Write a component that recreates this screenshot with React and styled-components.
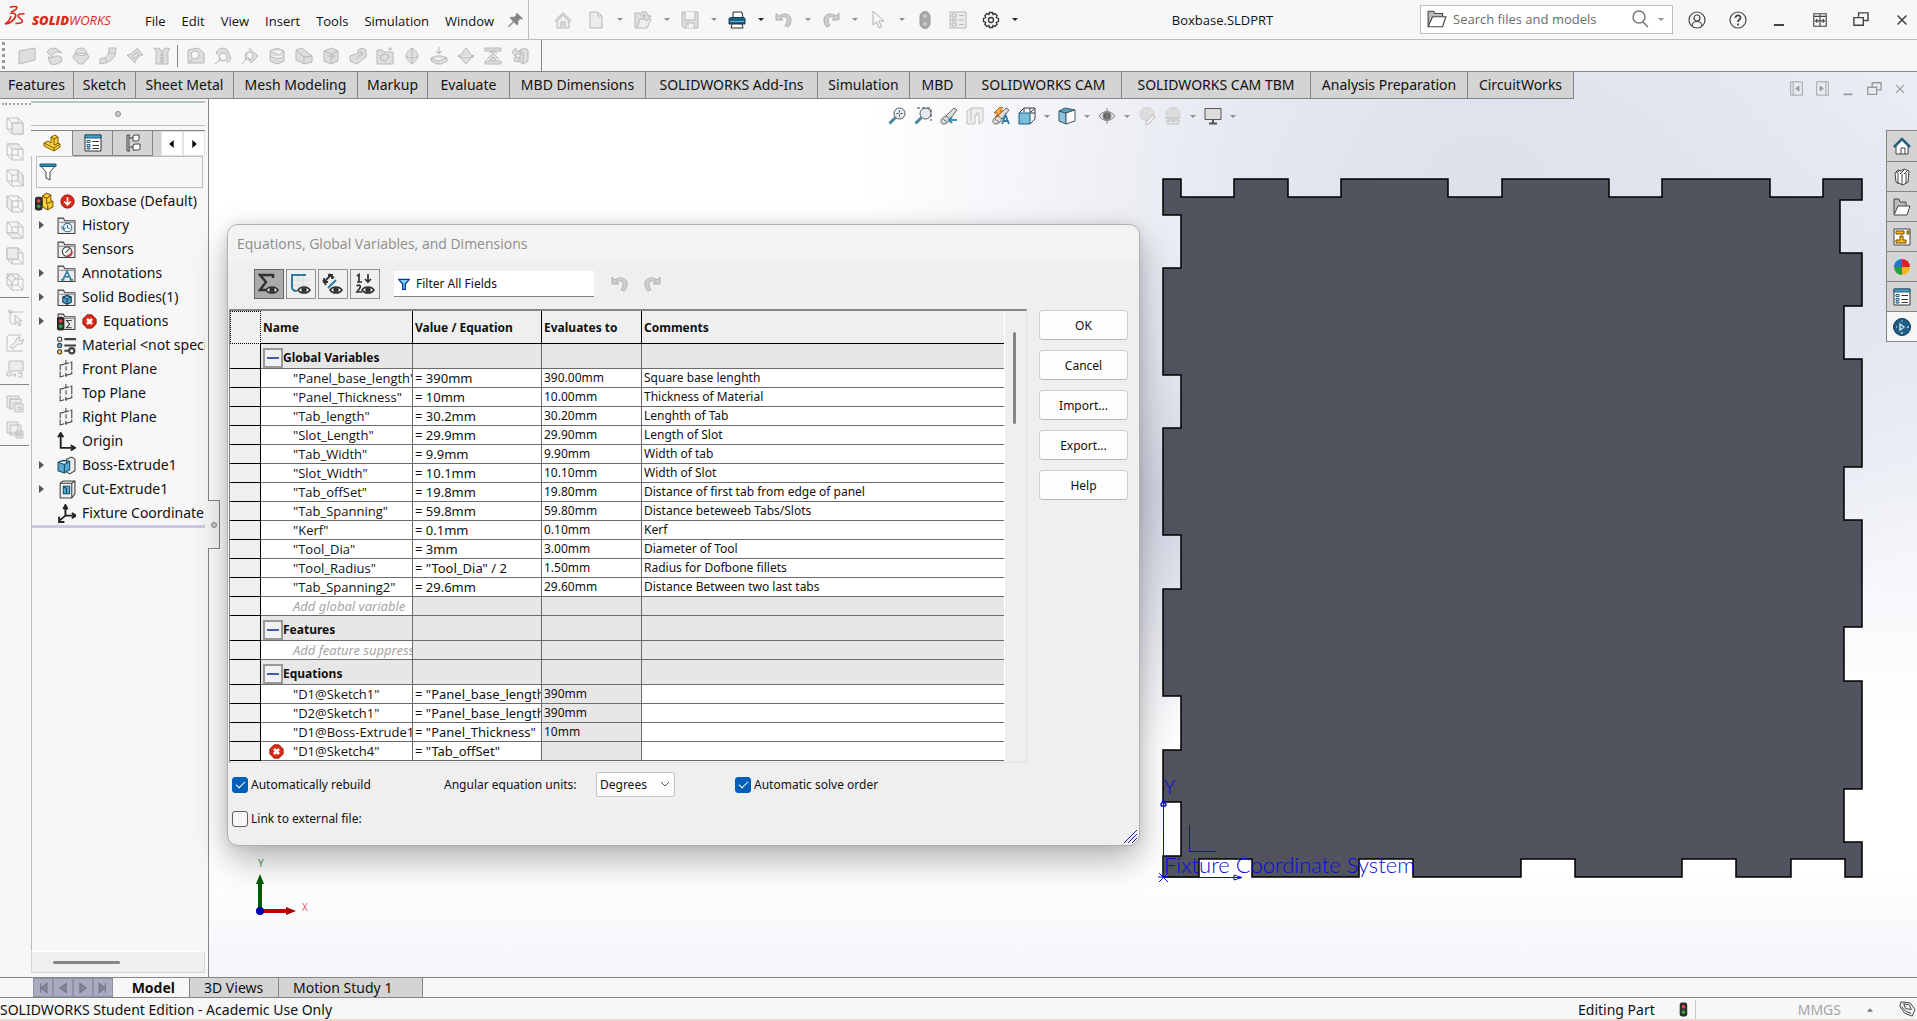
import styled, { createGlobalStyle, css } from "styled-components";

const GlobalStyle = createGlobalStyle`
  * { box-sizing: border-box; }
  body {
    margin: 0;
    overflow: hidden;
    font-family: "Noto Sans", "Open Sans", sans-serif;
    font-size: 14px;
    color: #111;
  }
  button, input, select { font-family: inherit; color: inherit; }
  button { border: none; padding: 0; background: none; }
  svg { display: block; flex: none; }
`;

/* ---------- page frame ---------- */

const Page = styled.div`
  height: 100vh;
  display: flex;
  flex-direction: column;
  background: #f7f7f7;
`;
const TitleBar = styled.header`
  display: flex;
  align-items: center;
  height: 40px;
  flex: none;
  border-bottom: 1px solid #bdbdbd;
  font-family: "Open Sans", "Noto Sans", sans-serif;
`;
const Brand = styled.div`
  display: flex;
  align-items: center;
  gap: 7px;
  width: 137px;
  padding: 0 0 7px 4px;
`;
const BrandName = styled.span`
  font-size: 13px;
  line-height: 16px;
  font-style: italic;
  color: #da291c;
  padding-top: 7px;
  b { font-weight: 800; }
`;
const Menu = styled.nav`
  display: flex;
  align-items: center;
  height: 39px;
  width: 392px;
  padding-top: 2px;
  border-right: 1px solid #bdbdbd;
`;
const MenuItem = styled.button`
  font-size: 13px;
  line-height: 18px;
  padding: 0 8px;
  white-space: nowrap;
`;
const PinButton = styled.button`
  margin-left: 6px;
`;
const QuickTools = styled.div`
  display: flex;
  align-items: center;
  padding-left: 22px;
`;
const ToolButton = styled.button`
  display: flex;
  align-items: center;
  justify-content: center;
  width: ${(p) => p.$w || 24}px;
  height: 24px;
  margin-right: ${(p) => p.$gap || 0}px;
`;
const Caret = styled.button`
  display: flex;
  align-items: center;
  justify-content: center;
  width: ${(p) => p.$w || 23}px;
  height: 24px;
  &::before {
    content: "";
    border: 3px solid transparent;
    border-top-color: ${(p) => (p.$on ? "#222" : "#8f8f8f")};
    border-bottom-width: 0;
  }
`;
const DocName = styled.h1`
  flex: 1;
  margin: 0;
  padding-right: 1px;
  text-align: center;
  font-size: 13px;
  line-height: 18px;
  font-weight: 400;
`;
const Search = styled.label`
  display: flex;
  align-items: center;
  width: 253px;
  height: 29px;
  margin-bottom: 1px;
  padding-left: 6px;
  background: #fff;
  border: 1px solid #bdbdbd;
`;
const SearchInput = styled.input`
  flex: 1;
  min-width: 0;
  margin-left: 6px;
  padding: 0;
  border: none;
  outline: none;
  background: none;
  font-size: 13px;
  &::placeholder { color: #6c6c6c; opacity: 1; }
`;
const WindowButtons = styled.div`
  display: flex;
  align-items: center;
  padding-left: 3px;
`;
const ShelfBar = styled.div`
  display: flex;
  align-items: center;
  height: 31px;
  flex: none;
  width: 542px;
  padding-left: 2px;
  border-right: 1px solid #858585;
`;
const Grip = styled.div`
  width: 3px;
  height: 27px;
  margin-right: 8px;
  border-left: 3px dotted #9a9a9a;
`;
const ShelfLine = styled.div`
  width: 1px;
  height: 22px;
  margin: 0 4px 0 2px;
  background: #858585;
`;
const Main = styled.main`
  flex: 1;
  min-height: 0;
  display: flex;
  flex-direction: column;
  border-top: 1px solid #858585;
  background:
    radial-gradient(ellipse 620px 520px at 1480px 110px, #dde1ec 0%, rgba(221, 225, 236, 0.75) 40%, rgba(255, 255, 255, 0) 100%),
    radial-gradient(ellipse 300px 260px at 1160px 420px, #ccd0df 0%, rgba(255, 255, 255, 0) 100%),
    radial-gradient(ellipse 700px 420px at 1900px 230px, #e4e8f1 0%, rgba(255, 255, 255, 0) 100%),
    linear-gradient(#fff 0%, #fff 88%, #f4f5fa 100%);
`;
const TabBar = styled.div`
  display: flex;
  height: 27px;
  flex: none;
`;
const CommandTab = styled.button`
  width: ${(p) => p.$w}px;
  background: #d4d4d4;
  border-right: 1px solid #858585;
  border-bottom: 1px solid #858585;
  font-size: 14px;
  line-height: 24px;
  white-space: nowrap;
`;
const DocButtons = styled.div`
  display: flex;
  align-items: center;
  margin-left: auto;
  padding: 6px 4px 0 0;
`;
const Body = styled.div`
  flex: 1;
  min-height: 0;
  display: flex;
`;

/* ---------- left side ---------- */

const ViewBar = styled.div`
  width: 31px;
  background: #f7f7f7;
`;
const TopGrip = styled.div`
  margin: 4px 0 11px 2px;
  height: 2px;
  border-top: 2px dotted #a5a5a5;
`;
const ViewGroup = styled.div`
  display: flex;
  flex-direction: column;
  gap: 8px;
  padding: 1px 0 6px 6px;
  margin: 0 2px 9px 0;
  border-bottom: 1px solid #858585;
  button { height: 18px; }
`;
const Panel = styled.aside`
  display: flex;
  flex-direction: column;
  width: 178px;
  padding-right: 3px;
  background: #f7f7f7;
  border-right: 1px solid #858585;
`;
const Splitter = styled.div`
  display: flex;
  align-items: center;
  justify-content: center;
  height: 25px;
  margin-top: 2px;
  border-top: 2px solid #b9c4c9;
  border-bottom: 1px solid #bdbdbd;
`;
const Dot = styled.span`
  width: 6px;
  height: 6px;
  border-radius: 3px;
  border: 1px solid #8c8c8c;
  background: #ccc;
`;
const PanelTabs = styled.div`
  display: flex;
  height: 26px;
  margin-top: 4px;
  background: #d4d4d4;
  border-top: 1px solid #858585;
`;
const PanelTab = styled.button`
  display: flex;
  align-items: center;
  justify-content: center;
  width: ${(p) => (p.$active ? 42 : 40)}px;
  border-right: 1px solid #858585;
  border-bottom: 1px solid ${(p) => (p.$active ? "#f7f7f7" : "#858585")};
  background: ${(p) => (p.$active ? "#f7f7f7" : "#d4d4d4")};
`;
const PanelScrollers = styled.div`
  flex: 1;
  display: flex;
  padding-left: 8px;
`;
const PanelArrow = styled.button`
  flex: 1;
  display: flex;
  align-items: center;
  justify-content: center;
  background: #fff;
  border: 1px solid #e2e2e2;
`;
const TreeBox = styled.div`
  flex: 1;
  min-height: 0;
  border-left: 1px solid #bdbdbd;
  overflow: hidden;
`;
const FilterBox = styled.label`
  display: flex;
  align-items: center;
  height: 32px;
  margin: 0 2px 1px 4px;
  padding-left: 2px;
  border: 1px solid #bdbdbd;
  input {
    width: 130px;
    border: none;
    outline: none;
    background: none;
  }
`;
const Tree = styled.ul`
  list-style: none;
  margin: 0;
  padding: 0;
  border-bottom: 3px solid #c9c9e2;
`;
const TreeRow = styled.li`
  display: flex;
  align-items: center;
  gap: 6px;
  height: 24px;
  padding-left: ${(p) => (p.$root ? 3 : 7)}px;
  font-size: 14px;
  line-height: 20px;
  white-space: nowrap;
`;
const Expander = styled.span`
  width: 12px;
  flex: none;
  &::before {
    content: "";
    display: ${(p) => (p.$show ? "block" : "none")};
    width: 0;
    border: 4px solid transparent;
    border-left: 5px solid #555;
    border-right-width: 0;
  }
`;
const HScroll = styled.div`
  display: flex;
  align-items: center;
  height: 22px;
  margin-bottom: 4px;
  padding-left: 21px;
  background: #efefef;
  border: 1px solid #d6d6d6;
  border-top-color: #fff;
  &::before {
    content: "";
    width: 67px;
    height: 3px;
    border-radius: 2px;
    background: #858585;
  }
`;

/* ---------- graphics area ---------- */

const Viewport = styled.section`
  position: relative;
  flex: 1;
  min-width: 0;
`;
const HeadsUp = styled.div`
  display: flex;
  justify-content: center;
  padding: 5px 3px 0 0;
`;
const PanelHandle = styled.button`
  position: absolute;
  left: -1px;
  top: 401px;
  display: flex;
  align-items: center;
  justify-content: center;
  width: 12px;
  height: 49px;
  background: #f7f7f7;
  border: 1px solid #858585;
  border-left: none;
`;
const Board = styled.svg`
  position: absolute;
  left: 941px;
  top: 66px;
`;
const Triad = styled.svg`
  position: absolute;
  left: 36px;
  bottom: 50px;
`;
const TaskPane = styled.div`
  position: absolute;
  right: 0;
  top: 31px;
  width: 31px;
  border: 1px solid #858585;
  border-right: none;
`;
const TaskButton = styled.button`
  display: flex;
  align-items: center;
  justify-content: center;
  width: 30px;
  height: 30px;
  background: ${(p) => (p.$light ? "#f7f7f7" : "#d4d4d4")};
  & + & { border-top: 1px solid #858585; }
`;

/* ---------- equations dialog ---------- */

const Dialog = styled.section`
  position: absolute;
  left: 18px;
  top: 125px;
  width: 913px;
  background: #efefef;
  border: 1px solid #b0b0b0;
  border-radius: 11px;
  box-shadow: 0 14px 34px rgba(0, 0, 0, 0.3), 0 0 10px rgba(0, 0, 0, 0.08);
  font-size: 12px;
  z-index: 2;
`;
const DialogTitle = styled.h2`
  margin: 0;
  padding: 0 9px;
  font-family: "Open Sans", "Noto Sans", sans-serif;
  font-size: 14px;
  line-height: 37px;
  font-weight: 400;
  color: #8d8d8d;
  background: #f3f3f3;
  border-radius: 10px 10px 0 0;
`;
const DialogTools = styled.div`
  display: flex;
  align-items: center;
  gap: 2px;
  padding: 7px 0 10px 26px;
`;
const ViewToggle = styled.button`
  display: flex;
  align-items: center;
  justify-content: center;
  width: 30px;
  height: 30px;
  border: 1px solid #8f8f8f;
  background: ${(p) => (p.$on ? "#ababab" : "#efefef")};
  ${(p) => p.$on && css`border-color: #666;`}
`;
const FilterField = styled.label`
  display: flex;
  align-items: center;
  gap: 6px;
  width: 200px;
  height: 26px;
  margin: 0 12px;
  padding-left: 4px;
  background: #fff;
  border-bottom: 1px solid #858585;
  input {
    width: 150px;
    padding: 0;
    border: none;
    outline: none;
    font-size: 12px;
    &::placeholder { color: #111; opacity: 1; }
  }
`;
const DialogBody = styled.div`
  display: flex;
  padding-left: 1px;
`;
const TableFrame = styled.div`
  display: flex;
  flex: 1;
  min-width: 0;
  height: 454px;
  border: 1px solid #e2e2e2;
  border-top: 2px solid #858585;
  border-left: 1px solid #858585;
  overflow: hidden;
`;
const TableScroll = styled.div`
  flex: 1;
  min-width: 0;
`;
const Table = styled.table`
  width: 100%;
  table-layout: fixed;
  border-collapse: separate;
  border-spacing: 0;
  color: #111;
`;
const Th = styled.th`
  height: 33px;
  padding: 0 2px;
  text-align: left;
  font-size: 12px;
  background: #efefef;
  border-bottom: 1px solid #000;
  border-right: 1px solid #000;
  &:first-child { border: 1px dotted #000; }
  &:last-child { border-right: none; }
`;
const Td = styled.td`
  height: 19px;
  padding: 0 2px;
  font-size: ${(p) => (p.$big ? 13 : 12)}px;
  line-height: 18px;
  white-space: nowrap;
  overflow: hidden;
  background: ${(p) => (p.$grey ? "#e7e7e7" : "#fff")};
  border-right: 1px solid #6b6b6b;
  border-bottom: 1px solid #6b6b6b;
  &:last-child { border-right: none; }
`;
const Gutter = styled.td`
  padding: 0;
  background: #efefef;
  border-right: 1px solid #000;
  border-bottom: 1px solid #000;
`;
const NameCell = styled.div`
  display: flex;
  align-items: center;
  padding-left: ${(p) => (p.$flag ? 6 : 30)}px;
  gap: 9px;
  font-family: "Open Sans", "Noto Sans", sans-serif;
`;
const Hint = styled.i`
  color: #a6a6a6;
  font-family: "Noto Sans", sans-serif;
`;
const GroupName = styled.div`
  display: flex;
  align-items: flex-end;
  height: 24px;
  font-size: 12px;
  line-height: 20px;
  font-weight: 700;
`;
const Collapse = styled.button`
  display: flex;
  align-items: center;
  justify-content: center;
  width: 20px;
  height: 20px;
  border: 2px solid #999;
  background: #f2f2f2;
  &::before {
    content: "";
    width: 12px;
    height: 2px;
    background: #3f5fa8;
  }
`;
const VScroll = styled.div`
  width: 22px;
  padding: 21px 0 0 8px;
  border-left: 1px solid #fff;
  &::before {
    content: "";
    display: block;
    width: 3px;
    height: 92px;
    border-radius: 2px;
    background: #858585;
  }
`;
const Actions = styled.div`
  display: flex;
  flex-direction: column;
  gap: 10px;
  width: 112px;
  padding: 1px 11px 0 12px;
`;
const ActionButton = styled.button`
  height: 30px;
  font-size: 12px;
  background: #fdfdfd;
  border: 1px solid #cfcfcf;
  border-bottom-color: #b5b5b5;
  border-radius: 4px;
`;
const Options = styled.div`
  display: grid;
  grid-template-columns: 212px 152px 139px 1fr;
  align-items: center;
  row-gap: 13px;
  padding: 9px 0 17px 4px;
`;
const Check = styled.label`
  display: flex;
  align-items: center;
  gap: 3px;
  font-size: 12px;
  line-height: 18px;
  white-space: nowrap;
  input {
    appearance: none;
    width: 16px;
    height: 16px;
    margin: 0;
    border: 1px solid #5f5f5f;
    border-radius: 3px;
    background: #f7f7f7;
  }
  input:checked {
    display: flex;
    align-items: center;
    justify-content: center;
    border-color: #005fb8;
    background: #005fb8;
  }
  input:checked::before {
    content: "";
    width: 8px;
    height: 4px;
    margin-bottom: 2px;
    border-left: 1px solid #fff;
    border-bottom: 1px solid #fff;
    transform: rotate(-45deg);
  }
`;
const SelectWrap = styled.div`
  position: relative;
  width: 79px;
  svg {
    position: absolute;
    right: 5px;
    top: 9px;
    pointer-events: none;
  }
`;
const Select = styled.select`
  appearance: none;
  width: 79px;
  height: 25px;
  padding: 0 3px;
  font-size: 12px;
  background: #fdfdfd;
  border: 1px solid #c4c4c4;
  border-radius: 2px;
`;
const ResizeGrip = styled.svg`
  position: absolute;
  right: 1px;
  bottom: 1px;
`;

/* ---------- bottom ---------- */

const SheetTabs = styled.div`
  display: flex;
  height: 21px;
  flex: none;
  padding-left: 33px;
  border-top: 1px solid #858585;
  border-bottom: 1px solid #858585;
`;
const NavButton = styled.button`
  display: flex;
  align-items: center;
  justify-content: center;
  width: 20px;
  background: #a9abbf;
  border: 1px solid #8f91a5;
`;
const SheetTab = styled.button`
  padding: 0 14px;
  width: ${(p) => p.$w}px;
  text-align: ${(p) => (p.$active ? "right" : "left")};
  font-size: 14px;
  line-height: 18px;
  border-right: 1px solid #858585;
  background: ${(p) => (p.$active ? "#f7f7f7" : "#d4d4d4")};
  font-weight: ${(p) => (p.$active ? 700 : 400)};
`;
const StatusBar = styled.footer`
  display: flex;
  align-items: center;
  height: 23px;
  flex: none;
  padding: 2px 1px 0 0;
  font-size: 14px;
  line-height: 20px;
  border-bottom: 2px solid #ecd5cb;
`;
const StatusCell = styled.span`
  margin-left: ${(p) => (p.$end ? "auto" : "0")};
  padding-right: ${(p) => p.$pad || 0}px;
  color: ${(p) => (p.$muted ? "#a6a6a6" : "#111")};
`;
const StatusLine = styled.span`
  width: 1px;
  height: 19px;
  margin: 0 102px 0 5px;
  background: #c9c9c9;
`;

/* ---------- icons ---------- */

const Icon = ({ s = 18, children, stroke = "#404040", fill = "none", w = 1 }) => (
  <svg width={s} height={s} viewBox="0 0 18 18" fill={fill} stroke={stroke} strokeWidth={w} aria-hidden="true">
    {children}
  </svg>
);
const Pale = ({ children }) => <Icon stroke="#b8b8b8" fill="#dedede">{children}</Icon>;

const Logo = () => (
  <svg width="21" height="22" viewBox="0 0 21 22" fill="none" stroke="#da291c" strokeWidth="1.600" aria-hidden="true">
    <path d="M6 2.500c2-1.200 7-1.400 7 0 0 1.300-3 3.300-6 4.500" />
    <path d="M6 8.500c4-1.500 7 .5 5 4-2 3.500-6 6-10 6.500 3-1.500 5-4.500 6-8" />
    <path d="M20.500 9c-4-.8-6.500.2-6.500 2 0 2 4.500 2.800 4.500 5 0 2-3.500 2.600-7 2.400" />
  </svg>
);

const Pin = () => (
  <Icon s={15} stroke="none" fill="#858585">
    <path d="M11 0l7 7-2 1-1-1-3 3c1 3 0 4-1 5l-4-4-6 6-1-1 6-6-4-4c1-1 3-2 5-1l3-3-1-1z" />
  </Icon>
);
const quick = {
  home: <Pale><path d="M3 9v8h12V9L9 3z" fill="#ececec" /><path d="M1 9.500L9 1.500l8 8-1.500 1L9 4l-6.500 6.500zM7 17v-6h4v6" /></Pale>,
  new: <Pale><path fill="#ececec" d="M3 1h8l4 4v12H3zM11 1v4h4" /></Pale>,
  open: <Pale><path d="M1 2h5l1 2h7v5H6l-3 8H1z" /><path d="M6 8h11l-4 9H3z" fill="#ececec" /><path d="M7 1c4-1 7 0 7 4h3l-4 5-4-5h2c0-2-2-3-4-4" /></Pale>,
  save: <Pale><path d="M1 1h16v16H3l-2-2z" /><path d="M4 1v8h10V1M5 17v-5h8v5" fill="#f4f4f4" /><path d="M7 13v3" /></Pale>,
  print: (
    <Icon stroke="#2b2b2b">
      <path fill="#fff" d="M5 7V1h9l1 6" />
      <path fill="#1d5f85" stroke="#123e57" d="M1 8c0-1 1-1.500 2-1.500h12c1 0 2 .5 2 1.500v5H1z" />
      <path stroke="#62b4dc" d="M2 10.500h14" />
      <path fill="#fff" d="M4 13h10l1 4H3z" />
    </Icon>
  ),
  undo: <Icon stroke="#b0b0b0" fill="#cfcfcf"><path d="M1 2v7h7L5.500 6.500c4-2 7 0 6.500 3.500-.3 2-1 3-2 4.500l3 1.500c2-2 3-4 3-7C16 3 9 1 4 5z" /></Icon>,
  redo: <Icon stroke="#b0b0b0" fill="#cfcfcf"><path d="M17 2v7h-7l2.500-2.500c-4-2-7 0-6.500 3.500.3 2 1 3 2 4.500L5 16c-2-2-3-4-3-7C2 3 9 1 14 5z" /></Icon>,
  cursor: <Icon stroke="#b0b0b0" fill="#f7f7f7"><path d="M4 0v14l3.500-3 2.500 6 2.500-1L10 10h5z" /></Icon>,
  light: <Icon stroke="#999" fill="#a9a9a9"><rect x="4" y="0.500" width="10" height="17" rx="5" /><path d="M9 3v4M7 5h4M9 11v4M7 13h4" stroke="#ddd" /></Icon>,
  list: <Pale><path fill="#ececec" d="M1 1h16v16H1zM3 3h4v3H3zM3 8h4v2H3zM3 12h4v3H3zM10 4.500h5M10 9h5M10 13.500h5" /></Pale>,
  gear: (
    <Icon stroke="#333" w={1.3}>
      <path d="M7.500 1.500h3l.5 2 2-1 2.200 2.200-1 2 2.300.8v3l-2.300.8 1 2-2.200 2.200-2-1-.5 2h-3l-.5-2-2 1-2.200-2.200 1-2-2.300-.8v-3l2.300-.8-1-2L5 2.500l2 1z" />
      <circle cx="9" cy="9" r="2.500" />
    </Icon>
  ),
};

const shelf = [
  <path d="M1 4l16-3v12L1 17z" />,
  <path d="M2 5c3-5 9-5 12-1l3 2c-4-2-8-1-10 4zM3 10l4 1c2-2 6-3 9-1l1 4c-4 3-9 5-12 2z" />,
  <path d="M3 7c0-8 12-8 12 0M1 10c0-5 16-5 16 0-2 3-4 4-6 7H7c-2-3-6-4-6-7zM3 7c3 2 9 2 12 0" />,
  <path d="M10 1h7c0 9-4 15-16 16v-5c6-1 9-3 9-11zM10 6h7M6 11l2 5" />,
  <path d="M1 8c3 0 5-2 7-4 1-1 3-1 3-3l6 7c-3 0-5 2-6 4-1 1-2 2-2 4zM6 9l5-4 2 3-5 4z" />,
  <path d="M1 1c2 1 3 0 5 0l3 4 3-4c2 0 3 1 5 0-2 3-3 6-2 9v7H3v-7c1-3 0-6-2-9zM9 5v12M7 8h4M7 11h4M7 14h4" />,
  <path d="M1 3l10-2 6 5v10H1zM4 8a4 4 0 1 0 8 0a4 4 0 1 0-8 0M5 12l-3 5" />,
  <path d="M2 7c1-6 9-8 12-3l3 8-4 4M5 10a4 4 0 1 0 8 0a4 4 0 1 0-8 0M6 13l-5 4" />,
  <path d="M8 1l9 8-7 7-3-6M4 9a4 4 0 1 0 8 0a4 4 0 1 0-8 0M5 12l-4 5" />,
  <path d="M2 4l7-3 7 3v10l-7 3-7-3zM2 4c2 3 5 0 7 3s5-3 7-3M2 9c3 3 5 0 7 3 2-2 5 0 7-3" />,
  <path d="M1 3l6-2 10 8v6l-8 2-8-4zM1 3l8 7v7M9 10l8-1" />,
  <path d="M2 4l8-3 6 3v10l-7 3-7-3zM2 4l7 3v10M9 7l7-3M5 9h8M10 6l3 3-3 3" />,
  <path d="M1 9l5-2h3V3l4-2 4 2v7l-4 3-5 4-7-3zM7 12l6-6M9 5h4v4" />,
  <path d="M1 3h5l2 2h9v12H1zM4 9l5-2 4 2-3 5-5-1zM14 0v4M12 2h4" />,
  <path d="M9 1c3 2 6 5 6 8s-3 6-6 8c-3-2-6-5-6-8s3-6 6-8zM3 9c3 2 9 2 12 0M9 1v16" />,
  <path d="M9 0v6M6 4l3 3 3-3M1 11l5-2h6l5 2v3l-6 3H7l-6-3zM1 11l7 3 9-3" />,
  <path d="M9 1c2 2 3 3 4 6l4 2-4 3c-1 2-2 3-4 5-2-2-3-3-4-5L1 9l4-2c1-3 2-4 4-6zM1 9c5 2 11 2 16 0" />,
  <path d="M1 1h16v3H1zM1 14h16v3H1zM3 12l6-6 6 6M5 14l4-4 4 4M5 6l4-2 4 2" />,
  <path d="M9 3l4-2 4 2v11l-5 3-3-2zM12 5v12M1 5l4-4v3h5v3H5v3zM3 11l5-1v5l-5-1z" />,
];

/* highlighted face of each wireframe view cube */
const faces = ["M6 6h11v11H6z", "M1 1h11l5 5H6z", "M12 1l5 5v11l-5-5z", "M1 1l5 5v11l-5-5z", "M1 12h11l5 5H6z", "M1 1h11v11H1z", "M1 5l4-4 5 4-4 5z"];

const PaleOutline = ({ children }) => <Icon stroke="#bfbfbf" fill="#ededed">{children}</Icon>;

const Folder = ({ children }) => (
  <Icon s={19}>
    <path fill="#ececec" d="M1 16.500V2h5l1.500 2.500H17v12z" />
    <path d="M1 6h16" stroke="#8a8a8a" />
    {children}
  </Icon>
);
const Plane = () => (
  <Icon s={19}>
    <path d="M3 5l11-3v11L3 16z" strokeDasharray="9 1" />
    <path d="M8.500 0v18" strokeDasharray="4 2" />
  </Icon>
);
const Part = () => (
  <Icon stroke="#7d5c00" fill="#f9cf3a">
    <path d="M1 9l4-2 3 2V3l4-2 3 2v6l2 1v3l-6 4L1 12z" />
    <path fill="none" d="M8 3l3 2 4-2M11 5v6l5-2M1 9l10 5 6-4M11 14v3" />
  </Icon>
);
const Lights = () => (
  <g stroke="#222">
    <rect x="0.500" y="5" width="6" height="12" rx="2" fill="#2e2e2e" />
    <circle cx="3.500" cy="8.500" r="1.700" fill="#e44" stroke="none" />
    <circle cx="3.500" cy="13.500" r="1.700" fill="#3a3" stroke="none" />
  </g>
);
const RootIcon = () => (
  <Icon s={19} stroke="#7d5c00" fill="#f9cf3a">
    <path d="M7 4l4-3 4 2v5l2 1v5l-5 3-5-3z" />
    <path fill="none" d="M7 4l4 2 4-3M11 6v5l6-2M12 12v5" />
    <Lights />
  </Icon>
);
const ErrorMark = () => (
  <Icon s={15} stroke="#8e1409" fill="#d92a17">
    <path d="M6 1h6l5 5v6l-5 5H6l-5-5V6z" />
    <path d="M6 6l6 6M12 6l-6 6" stroke="#fff" strokeWidth="3" />
  </Icon>
);
const DownMark = () => (
  <Icon s={15} stroke="#8e1409" fill="#d92a17">
    <circle cx="9" cy="9" r="8" />
    <path d="M9 4v9M5 9l4 4 4-4" stroke="#fff" strokeWidth="2" fill="none" />
  </Icon>
);
const Funnel = () => (
  <Icon>
    <path fill="#fff" d="M1 2h16l-6 7v8l-4-2V9z" />
    <path fill="#2d86b3" stroke="#1b5e80" d="M1 1h16v2.500H1z" />
  </Icon>
);
const Properties = () => (
  <Icon stroke="#333">
    <path fill="#fff" d="M1 1h16v16H1z" />
    <path fill="#4a9ec6" stroke="#1b5e80" d="M1 1h16v3H1z" />
    <path stroke="#1b5e80" d="M3 6.500h3v2H3zM3 10.500h3v2H3zM3 14h3v1H3z" />
    <path d="M8.500 7.500H15M8.500 11.500H15M8.500 14.500H15" />
  </Icon>
);
const ConfigTree = () => (
  <Icon>
    <path d="M3 1v16M5 1v16M3 1h3M3 17h3M5 4h4M5 13h4" />
    <path fill="#fff" d="M9 2l2-1h4v5l-1 1H9zM9 11l2-1h5v5l-1 1H9z" />
  </Icon>
);

const tree = [
  ["History", true, <Folder><circle cx="10" cy="11" r="4" stroke="#2d7ba3" fill="#fff" /><path d="M10 8.500V11l2 1M4 10l2 3 2-2" stroke="#2d7ba3" /></Folder>],
  ["Sensors", false, <Folder><circle cx="9.500" cy="11" r="4.500" fill="#fff" /><path d="M8 12l4-4" /><path d="M10 15c3 0 4-2 4-4" stroke="#d33" strokeWidth="2" /></Folder>],
  ["Annotations", true, <Folder><path d="M5.500 15l4-8 4 8M7 12h5M4 15h3M12 15h3" stroke="#2d7ba3" strokeWidth="1.500" /></Folder>],
  ["Solid Bodies(1)", true, <Folder><path fill="#4a9ec6" stroke="#123e57" d="M5.500 8.500l4-1.500 4 1.500v5l-4 2-4-2zM5.500 8.500l4 1.500 4-1.500M9.500 10v5.500" /></Folder>],
  ["Equations", true, <Folder><Lights /><path d="M14 8H9l3 3.500L9 15h5" /></Folder>],
  ["Material <not specified>", false, (
    <Icon s={19}>
      <circle cx="2.500" cy="3" r="2" fill="#fff" /><circle cx="2.500" cy="9" r="2" fill="#5bb5e0" /><circle cx="2.500" cy="15" r="2" fill="#f9cf3a" />
      <path d="M7 3h11M7 9h11M7 14h4" strokeWidth="2" /><circle cx="14" cy="14" r="2.500" strokeWidth="2" />
    </Icon>
  )],
  ["Front Plane", false, <Plane />],
  ["Top Plane", false, <Plane />],
  ["Right Plane", false, <Plane />],
  ["Origin", false, <Icon s={19} stroke="#222" w={1.8}><path d="M3.500 2v13H16M1 5l2.500-4L6 5M13 12.500l4 2.500-4 2.500" /></Icon>],
  ["Boss-Extrude1", true, <Icon s={19}><path fill="#eee" d="M9 3l5-2 3 2v11l-5 3-3-2z" /><path fill="#5aa9cc" stroke="#174e6b" d="M1 6l5-2 6 1v8l-5 3-6-2zM1 6l6 2 5-3M7 8v8" /></Icon>],
  ["Cut-Extrude1", true, <Icon s={19}><path fill="#eee" d="M3 3l3-2h11v12l-3 4H3zM3 3h11v14M14 3l3-2" /><path fill="#5aa9cc" stroke="#174e6b" d="M6 6h6v7H6zM6 6l3 2v5" /></Icon>],
  ["Fixture Coordinate System1", false, <Icon s={19} stroke="#222" w={1.8}><path d="M8 2v9h9M8 11l-6 5M6 5l2-4 2 4M14 8.500l4 2.500-4 2.500M2 12v5h5" /></Icon>],
];

const Magnifier = ({ children }) => (
  <Icon><path d="M1.500 16.500l6-6" stroke="#4b86a6" strokeWidth="3" /><circle cx="11.500" cy="6.500" r="5.500" fill="#e4ebf1" stroke="#555" />{children}</Icon>
);
const Scope = ({ children }) => (
  <Icon stroke="#666" fill="#ddd"><path d="M1 14c0-3 3-4 5-5l8-8 3 2-7 9c-1 2-3 5-6 5s-3-2-3-3zM6 9l4 3M3 12l4 3" />{children}</Icon>
);
const ball = <path d="M9 0.500c5 0 7 4 7 7s-3 6-7 6-7-3-7-6 2-7 7-7z" fill="#dcdcdc" stroke="#cfcfcf" />;
const headsUp = [
  [<Magnifier><path d="M8.500 6.500h2M12.500 6.500h2M11.500 3.500v2M11.500 7.500v2" /></Magnifier>],
  [<Magnifier><path d="M3 1h14v13" strokeDasharray="3 2" /></Magnifier>],
  [<Scope><path d="M9 13h8M12 10l-3 3 3 3" stroke="#3e8fb8" strokeWidth="2" fill="none" /></Scope>],
  [<PaleOutline><path d="M1 4l4-3h12v13l-4 3v-9H9v9H1zM5 1v13M9 8l4-3" /></PaleOutline>],
  [<Scope><path d="M8 0L2 6h4L3 11l8-7H8l3-4z" fill="#f6b73c" stroke="#c0561a" /><path d="M10 17l3.500-9 3.500 9M11 14h5" stroke="#2d7ba3" strokeWidth="1.800" fill="none" /></Scope>],
  [<Icon><path d="M6 1h11v11M6 1v4M12 1v4M17 6h-4M1 6l5-5M12 6l5-5M12 17l5-5" /><path fill="#7dbcd8" stroke="#1b5e80" d="M1 6h11v11H1z" /></Icon>, true],
  [<Icon stroke="#3a5a6b"><path fill="#8cc4dc" d="M1 4l7 2v11l-7-3z" /><path fill="#5c9fbe" d="M1 4l6-3 10 2-9 3z" /><path fill="#fff" d="M8 6l9-3v11l-9 3z" /></Icon>, true],
  [<Icon stroke="#888"><path d="M1 9c4-6 12-6 16 0-4 6-12 6-16 0z" fill="#ddd" /><circle cx="9" cy="9" r="4" fill="#666" /><path d="M9 1v16" /></Icon>, true],
  [<Icon>{ball}<path d="M8 15l6-7 3 2-6 7-3 1z" stroke="#bdbdbd" fill="#eee" /></Icon>],
  [<Icon>{ball}<path d="M1 11h16M1 14h16M3 17h12M4 10v7M9 12v5M14 10v7" stroke="#c4c4c4" /></Icon>, true],
  [<Icon stroke="#555"><path fill="#ddd" d="M1 1.500h16v11H1z" /><path d="M9 13v3M5 16.500h8" strokeWidth="2" /></Icon>, true],
];

const taskIcons = [
  <Icon><path fill="#fff" d="M3 8v9h12V8L9 3z" /><path d="M8 17v-6h4v6" /><path d="M1 10l8-8 8 8" stroke="#23607f" strokeWidth="2.500" /></Icon>,
  <Icon><path fill="#fff" d="M2 5l3-3 3 1 3-2 5 2-1 11-5 3-7-3zM5 5v11M9 6v11M13 5v10M3 5l3-2M7 6l4-4M11 6l4-4" /></Icon>,
  <Icon stroke="#444"><path fill="#bbb" d="M1 16V1h5l1 3h6v4" /><path fill="#fff" d="M5 8h12l-3 9H1z" /></Icon>,
  <Icon><path fill="#fff" d="M1 1h16v16H1z" /><path fill="#f4b81c" stroke="#6d4c00" d="M3 3h8v3H3zM14 3h2v3h-2zM7 8h3v4h3v3H3v-3h4z" /></Icon>,
  <Icon stroke="none"><path fill="#2c6fd1" d="M9 9V1a8 8 0 0 0-8 8z" /><path fill="#d22" d="M9 9h8a8 8 0 0 0-8-8z" /><path fill="#2a9d3a" d="M9 9H1a8 8 0 0 0 8 8z" /><path fill="#f2b51c" d="M9 9v8a8 8 0 0 0 8-8z" /></Icon>,
  <Properties />,
  <Icon stroke="#103b55"><circle cx="9" cy="9" r="8.500" fill="#1f5f85" /><path d="M7 6l4 3-4 3zM3 9h1M14 9h2M9 2.500v1M9 14v2" stroke="#b8dcee" fill="none" strokeWidth="1.500" /></Icon>,
];

const Eye = () => (
  <g><path d="M8 17c2.500-4 9.500-4 12 0-2.500 4-9.500 4-12 0z" fill="#fff" stroke="#333" /><circle cx="14" cy="17" r="2" fill="#333" /></g>
);
const EqIcon = ({ children }) => (
  <svg width="22" height="22" viewBox="0 0 22 22" fill="none" stroke="#333" strokeWidth="1.500" aria-hidden="true">{children}<Eye /></svg>
);
const toggles = [
  ["Equation view", <EqIcon><path d="M15 5V2H2l6 7-6 8h8" strokeWidth="2.500" /></EqIcon>],
  ["Sketch equation view", <EqIcon><path d="M8 2v16M13 2v16M2 7h18M2 12h18" stroke="#dcdcdc" strokeWidth="1" /><path d="M16 2H2v12c0 3 2 4 5 4" stroke="#2d7ba3" strokeWidth="2" /></EqIcon>],
  ["Dimension view", <EqIcon><path d="M2 9l7-7M1 7l3 5M7 1l5 4M2 5v4h4M6 2h4v4" strokeWidth="1.800" /><path d="M6 15l8-8" stroke="#2d7ba3" strokeWidth="2" /></EqIcon>],
  ["Ordered view", <EqIcon><path d="M3 3l2-1.500V9M3 9h5M2.500 13c3-2 5 0 3 2.500L3 19h5M14 1v8M11 6l3 3 3-3" strokeWidth="1.700" /></EqIcon>],
];

/* ---------- data ---------- */

const commandTabs = [
  ["Features", 74], ["Sketch", 62], ["Sheet Metal", 98], ["Mesh Modeling", 124], ["Markup", 70],
  ["Evaluate", 82], ["MBD Dimensions", 136], ["SOLIDWORKS Add-Ins", 172], ["Simulation", 92], ["MBD", 56],
  ["SOLIDWORKS CAM", 156], ["SOLIDWORKS CAM TBM", 189], ["Analysis Preparation", 157], ["CircuitWorks", 106],
];

const globals = [
  ["Panel_base_length", "390mm", "390.00mm", "Square base lenghth"],
  ["Panel_Thickness", "10mm", "10.00mm", "Thickness of Material"],
  ["Tab_length", "30.2mm", "30.20mm", "Lenghth of Tab"],
  ["Slot_Length", "29.9mm", "29.90mm", "Length of Slot"],
  ["Tab_Width", "9.9mm", "9.90mm", "Width of tab"],
  ["Slot_Width", "10.1mm", "10.10mm", "Width of Slot"],
  ["Tab_offSet", "19.8mm", "19.80mm", "Distance of first tab from edge of panel"],
  ["Tab_Spanning", "59.8mm", "59.80mm", "Distance beteweeb Tabs/Slots"],
  ["Kerf", "0.1mm", "0.10mm", "Kerf"],
  ["Tool_Dia", "3mm", "3.00mm", "Diameter of Tool"],
  ["Tool_Radius", '"Tool_Dia" / 2', "1.50mm", "Radius for Dofbone fillets"],
  ["Tab_Spanning2", "29.6mm", "29.60mm", "Distance Between two last tabs"],
];
const equations = [
  ["D1@Sketch1", '"Panel_base_length"', "390mm"],
  ["D2@Sketch1", '"Panel_base_length"', "390mm"],
  ["D1@Boss-Extrude1", '"Panel_Thickness"', "10mm"],
  ["D1@Sketch4", '"Tab_offSet"', ""],
];

const outline =
  "M1163 179H1181V197H1234V179H1288V197H1341V179H1448V197H1502V179H1609V197H1662V179H1770V197H1823V179H1862" +
  "V200H1840V253H1862V306H1844V359H1862V467H1844V520H1862V627H1844V681H1862V789H1844V842H1862V877" +
  "H1845V859H1791V877H1736V859H1682V877H1575V859H1521V877H1413V859H1359V877H1252V859H1199V877" +
  "H1163V856H1181V802H1163V750H1181V696H1163V589H1181V535H1163V428H1181V375H1163V268H1181V215H1163Z";

const Group = ({ title }) => (
  <tr>
    <Gutter />
    <Td $grey>
      <GroupName><Collapse aria-label={`Collapse ${title}`} />{title}</GroupName>
    </Td>
    <Td $grey /><Td $grey /><Td $grey />
  </tr>
);
const AddRow = ({ text }) => (
  <tr>
    <Gutter />
    <Td $big><NameCell><Hint>{text}</Hint></NameCell></Td>
    <Td $grey /><Td $grey /><Td $grey />
  </tr>
);
const VarRow = ({ row: [name, value, result, comment], derived, flag }) => (
  <tr>
    <Gutter />
    <Td $big><NameCell $flag={flag}>{flag && <ErrorMark />}<span>"{name}"</span></NameCell></Td>
    <Td $big>= {value}</Td>
    <Td $grey={derived}>{result}</Td>
    <Td>{comment}</Td>
  </tr>
);

const EquationsDialog = () => (
  <Dialog role="dialog" aria-labelledby="eq-title">
    <DialogTitle id="eq-title">Equations, Global Variables, and Dimensions</DialogTitle>
    <DialogTools>
      {toggles.map(([label, icon], i) => (
        <ViewToggle key={label} $on={i === 0} aria-label={label}>{icon}</ViewToggle>
      ))}
      <FilterField>
        <Icon s={12} stroke="#0a3c9c" w={2}><path fill="#7fd0f0" d="M1 2h16l-6 7v8H7V9z" /></Icon>
        <input placeholder="Filter All Fields" aria-label="Filter all fields" />
      </FilterField>
      <ToolButton $gap={6} aria-label="Undo">{quick.undo}</ToolButton>
      <ToolButton aria-label="Redo">{quick.redo}</ToolButton>
    </DialogTools>
    <DialogBody>
      <TableFrame>
        <TableScroll>
          <Table>
            <colgroup>
              <col width="31" /><col width="152" /><col width="129" /><col width="100" /><col />
            </colgroup>
            <thead>
              <tr><Th /><Th>Name</Th><Th>Value / Equation</Th><Th>Evaluates to</Th><Th>Comments</Th></tr>
            </thead>
            <tbody>
              <Group title="Global Variables" />
              {globals.map((row) => <VarRow key={row[0]} row={row} />)}
              <AddRow text="Add global variable" />
              <Group title="Features" />
              <AddRow text="Add feature suppression" />
              <Group title="Equations" />
              {equations.map((row) => <VarRow key={row[0]} row={row} flag={!row[2]} derived />)}
            </tbody>
          </Table>
        </TableScroll>
        <VScroll />
      </TableFrame>
      <Actions>
        {["OK", "Cancel", "Import...", "Export...", "Help"].map((t) => <ActionButton key={t}>{t}</ActionButton>)}
      </Actions>
    </DialogBody>
    <Options>
      <Check><input type="checkbox" defaultChecked />Automatically rebuild</Check>
      <label htmlFor="angle-units">Angular equation units:</label>
      <SelectWrap>
        <Select id="angle-units"><option>Degrees</option></Select>
        <svg width="10" height="7" viewBox="0 0 10 7" fill="none" stroke="#555"><path d="M1 1l4 4 4-4" /></svg>
      </SelectWrap>
      <Check><input type="checkbox" defaultChecked />Automatic solve order</Check>
      <Check><input type="checkbox" />Link to external file:</Check>
    </Options>
    <ResizeGrip width="15" height="15" viewBox="0 0 15 15" stroke="#1c1c8c">
      <path d="M1 14L14 1M5 14l9-9M9 14l5-5" />
    </ResizeGrip>
  </Dialog>
);

const winIcons = {
  user: <Icon stroke="#444" w={1.2}><circle cx="9" cy="9" r="8" /><circle cx="9" cy="7" r="3" /><path d="M4 15c0-6 10-6 10 0" /></Icon>,
  help: <Icon stroke="#444" w={1.2}><circle cx="9" cy="9" r="8" /><path d="M6.500 7c0-4 5.500-3 5 0-.3 1.600-2.500 1.600-2.500 4M9 12.500v2" strokeWidth="1.800" /></Icon>,
  min: <Icon stroke="#444" w={2}><path d="M4 14h10" /></Icon>,
  span: <Icon s={16} stroke="#444" w={1.3}><path d="M2 2h14v14H2zM9 2v14M2 5h14M4 10h10M6 8l-2 2 2 2M12 8l2 2-2 2" /></Icon>,
  restore: <Icon s={17} stroke="#444" w={1.5}><path d="M7 6V2h10v8h-4M2 7h10v8H2z" /></Icon>,
  close: <Icon s={16} stroke="#444" w={1.8}><path d="M4 4l10 10M14 4L4 14" /></Icon>,
};
const winLayout = { restore: { $w: 41, $gap: 5 }, close: { $w: 31 } };
const docIcons = [
  <Icon s={15} stroke="#999"><path d="M2 1h14v16H2zM5 1v16" /><path d="M12 6v6l-4-3z" fill="#999" /></Icon>,
  <Icon s={15} stroke="#999"><path d="M2 1h14v16H2zM13 1v16" /><path d="M6 6v6l4-3z" fill="#999" /></Icon>,
  <Icon s={16} stroke="#999" w={2}><path d="M4 15h10" /></Icon>,
  <Icon s={16} stroke="#999" w={1.5}><path d="M7 6V2h10v8h-4M2 7h10v8H2z" /></Icon>,
  <Icon s={14} stroke="#999" w={1.5}><path d="M4 4l10 10M14 4L4 14" /></Icon>,
];

const App = () => (
  <Page>
    <GlobalStyle />
    <TitleBar>
      <Brand><Logo /><BrandName><b>SOLID</b>WORKS</BrandName></Brand>
      <Menu>
        {["File", "Edit", "View", "Insert", "Tools", "Simulation", "Window"].map((m) => <MenuItem key={m}>{m}</MenuItem>)}
        <PinButton aria-label="Pin menu"><Pin /></PinButton>
      </Menu>
      <QuickTools>
        <ToolButton $gap={9} aria-label="Home">{quick.home}</ToolButton>
        {["new", "open", "save", "print", "undo", "redo", "cursor"].map((k) => [
          <ToolButton key={k} aria-label={k}>{quick[k]}</ToolButton>,
          <Caret key={`${k}-more`} $on={k === "print"} aria-label={`${k} options`} />,
        ])}
        <ToolButton $gap={9} aria-label="Rebuild">{quick.light}</ToolButton>
        <ToolButton $gap={9} aria-label="File properties">{quick.list}</ToolButton>
        <ToolButton aria-label="Options">{quick.gear}</ToolButton>
        <Caret $on aria-label="Options list" />
      </QuickTools>
      <DocName>Boxbase.SLDPRT</DocName>
      <Search>
        <Icon s={20} stroke="#444"><path fill="#bbb" d="M1 16V2h5l1 2h7v3" /><path fill="#fff" d="M5 7h12l-3 9H1z" /></Icon>
        <SearchInput placeholder="Search files and models" aria-label="Search files and models" />
        <Icon stroke="#777" w={1.5}><circle cx="8" cy="7" r="6" /><path d="M12 12l5 5" /></Icon>
        <Caret aria-label="Search scope" />
      </Search>
      <WindowButtons>
        {Object.entries(winIcons).map(([k, icon]) => (
          <ToolButton key={k} $w={41} {...winLayout[k]} aria-label={k}>{icon}</ToolButton>
        ))}
      </WindowButtons>
    </TitleBar>
    <ShelfBar>
      <Grip />
      {shelf.slice(0, 6).map((p, i) => <ToolButton key={i} $w={27} aria-label={`Surface tool ${i + 1}`}><Pale>{p}</Pale></ToolButton>)}
      <ShelfLine />
      {shelf.slice(6).map((p, i) => <ToolButton key={i} $w={27} aria-label={`Feature tool ${i + 1}`}><Pale>{p}</Pale></ToolButton>)}
    </ShelfBar>
    <Main>
      <TabBar>
        {commandTabs.map(([t, w]) => <CommandTab key={t} $w={w}>{t}</CommandTab>)}
        <DocButtons>
          {docIcons.map((icon, i) => <ToolButton key={i} $w={26} aria-label={`Document window ${i + 1}`}>{icon}</ToolButton>)}
        </DocButtons>
      </TabBar>
      <Body>
        <ViewBar>
          <TopGrip />
          <ViewGroup>
            {faces.map((d, i) => (
              <button key={i} aria-label={`View ${i + 1}`}>
                <Icon stroke="#bfbfbf"><path d="M1 1h11v11H1zM6 6h11v11H6zM1 1l5 5M12 1l5 5M1 12l5 5M12 12l5 5" /><path d={d} fill="#ebebeb" /></Icon>
              </button>
            ))}
          </ViewGroup>
          <ViewGroup>
            <button aria-label="Sketch"><PaleOutline><path fill="none" d="M4 1v12c0 2 1 3 3 3h3M1 4h6M5 4h12M2 2l4 4" /><path d="M9 7v9l2-2 2 4 2-1-2-4h3z" /></PaleOutline></button>
            <button aria-label="Repair"><PaleOutline><path fill="none" d="M15 1H3L1 3v14h16" /><path d="M4 13l6-6c0-3 2-4 4-4l-1 3 3 1 1-2c1 4-2 6-5 5l-5 5z" /></PaleOutline></button>
            <button aria-label="Move"><PaleOutline><path d="M3 1h14v10H3zM1 12h4v4H1zM12 13h4v4h-4M6 15h4M8 13l2 2-2 2" /></PaleOutline></button>
          </ViewGroup>
          <ViewGroup>
            <button aria-label="Group"><PaleOutline><path d="M1 1h12v3H4v9H1zM4 4h11v4H7v6H4zM9 9h8v8H9zM12 12h3v3h-3z" /></PaleOutline></button>
            <button aria-label="Ungroup"><PaleOutline><path d="M1 1h11v11H1zM4 4h11v10H4zM10 10h7v7h-7zM12 12h3v3h-3z" /></PaleOutline></button>
          </ViewGroup>
        </ViewBar>
        <Panel>
          <Splitter><Dot /></Splitter>
          <PanelTabs>
            <PanelTab $active aria-label="Feature tree"><Part /></PanelTab>
            <PanelTab aria-label="Property manager"><Properties /></PanelTab>
            <PanelTab aria-label="Configurations"><ConfigTree /></PanelTab>
            <PanelScrollers>
              <PanelArrow aria-label="Previous tab"><Icon s={10} stroke="none" fill="#000"><path d="M12 2v14L4 9z" /></Icon></PanelArrow>
              <PanelArrow aria-label="Next tab"><Icon s={10} stroke="none" fill="#000"><path d="M6 2v14l8-7z" /></Icon></PanelArrow>
            </PanelScrollers>
          </PanelTabs>
          <TreeBox>
            <FilterBox><Funnel /><input aria-label="Filter tree" /></FilterBox>
            <Tree>
              <TreeRow $root><RootIcon /><DownMark /><span>Boxbase (Default)</span></TreeRow>
              {tree.map(([name, open, icon]) => (
                <TreeRow key={name}>
                  <Expander $show={open} />{icon}{name === "Equations" && <ErrorMark />}<span>{name}</span>
                </TreeRow>
              ))}
            </Tree>
          </TreeBox>
          <HScroll />
        </Panel>
        <Viewport>
          <HeadsUp>
            {headsUp.map(([icon, more], i) => [
              <ToolButton key={i} $w={26} aria-label={`View setting ${i + 1}`}>{icon}</ToolButton>,
              more && <Caret key={`c${i}`} $w={14} aria-label={`View setting ${i + 1} options`} />,
            ])}
          </HeadsUp>
          <Board width="740" height="730" viewBox="1150 165 740 730">
            <path d={outline} fill="#51535f" stroke="#000" strokeWidth="1.500" />
            <g fill="none" stroke="#0a0ae0">
              <path d="M1163.500 877V803M1163 877.500h78M1189.500 825v26.500H1216M1159 873l9 9M1168 873l-9 9M1158 877h10" />
              <path d="M1161 806l2-7 3 7zM1234 875l8 2.500-8 2.500zM1161 803h5v3h-5z" />
            </g>
            <g fill="#0a0ae0" fontFamily="Lato, sans-serif" fontSize="22" fontWeight="300">
              <text x="1164" y="794" fontSize="19">Y</text>
              <text x="1164" y="873">Fixture Coordinate System</text>
            </g>
          </Board>
          <Triad width="70" height="72" viewBox="0 -4 70 72">
            <path d="M15 52V22" stroke="#005c00" strokeWidth="4" />
            <path d="M11 25l4-10 4 10z" fill="#005c00" />
            <path d="M15 52h28" stroke="#c00000" strokeWidth="4" />
            <path d="M41 48l10 4-10 4z" fill="#a80000" />
            <circle cx="15" cy="52" r="4" fill="#0000b0" />
            <g fontSize="10" fontFamily="Open Sans, sans-serif">
              <text x="13" y="8" fill="#3a963a">Y</text>
              <text x="57" y="52" fill="#e55">X</text>
            </g>
          </Triad>
          <TaskPane>
            {taskIcons.map((icon, i) => <TaskButton key={i} $light={i === 6} aria-label={`Task pane ${i + 1}`}>{icon}</TaskButton>)}
          </TaskPane>
          <PanelHandle aria-label="Collapse panel"><Dot /></PanelHandle>
          <EquationsDialog />
        </Viewport>
      </Body>
    </Main>
    <SheetTabs>
      {["M6 3v12M14 3v12L7 9z", "M13 3v12L5 9z", "M5 3v12l8-6z", "M4 3v12l7-6zM12 3v12"].map((d) => (
        <NavButton key={d} aria-label="Scroll sheets"><Icon s={14} stroke="#74768c" fill="#85879d" w={1.5}><path d={d} /></Icon></NavButton>
      ))}
      <SheetTab $active $w={77}>Model</SheetTab>
      <SheetTab $w={89}>3D Views</SheetTab>
      <SheetTab $w={144}>Motion Study 1</SheetTab>
    </SheetTabs>
    <StatusBar>
      <StatusCell>SOLIDWORKS Student Edition - Academic Use Only</StatusCell>
      <StatusCell $end $pad={23}>Editing Part</StatusCell>
      <svg width="12" height="15" viewBox="0 4 8 14"><Lights /></svg>
      <StatusLine />
      <StatusCell $muted $pad={25}>MMGS</StatusCell>
      <Icon s={8} stroke="none" fill="#777"><path d="M2 13l7-8 7 8z" /></Icon>
      <StatusCell $pad={25} />
      <Icon s={17}><path fill="#eee" d="M2 1l10 1 5 7-3 7-8-3-5-7zM5 3l6 1 2 5-6-1zM7 11l6 2M3 6l4 5" /></Icon>
    </StatusBar>
  </Page>
);

export default App;
